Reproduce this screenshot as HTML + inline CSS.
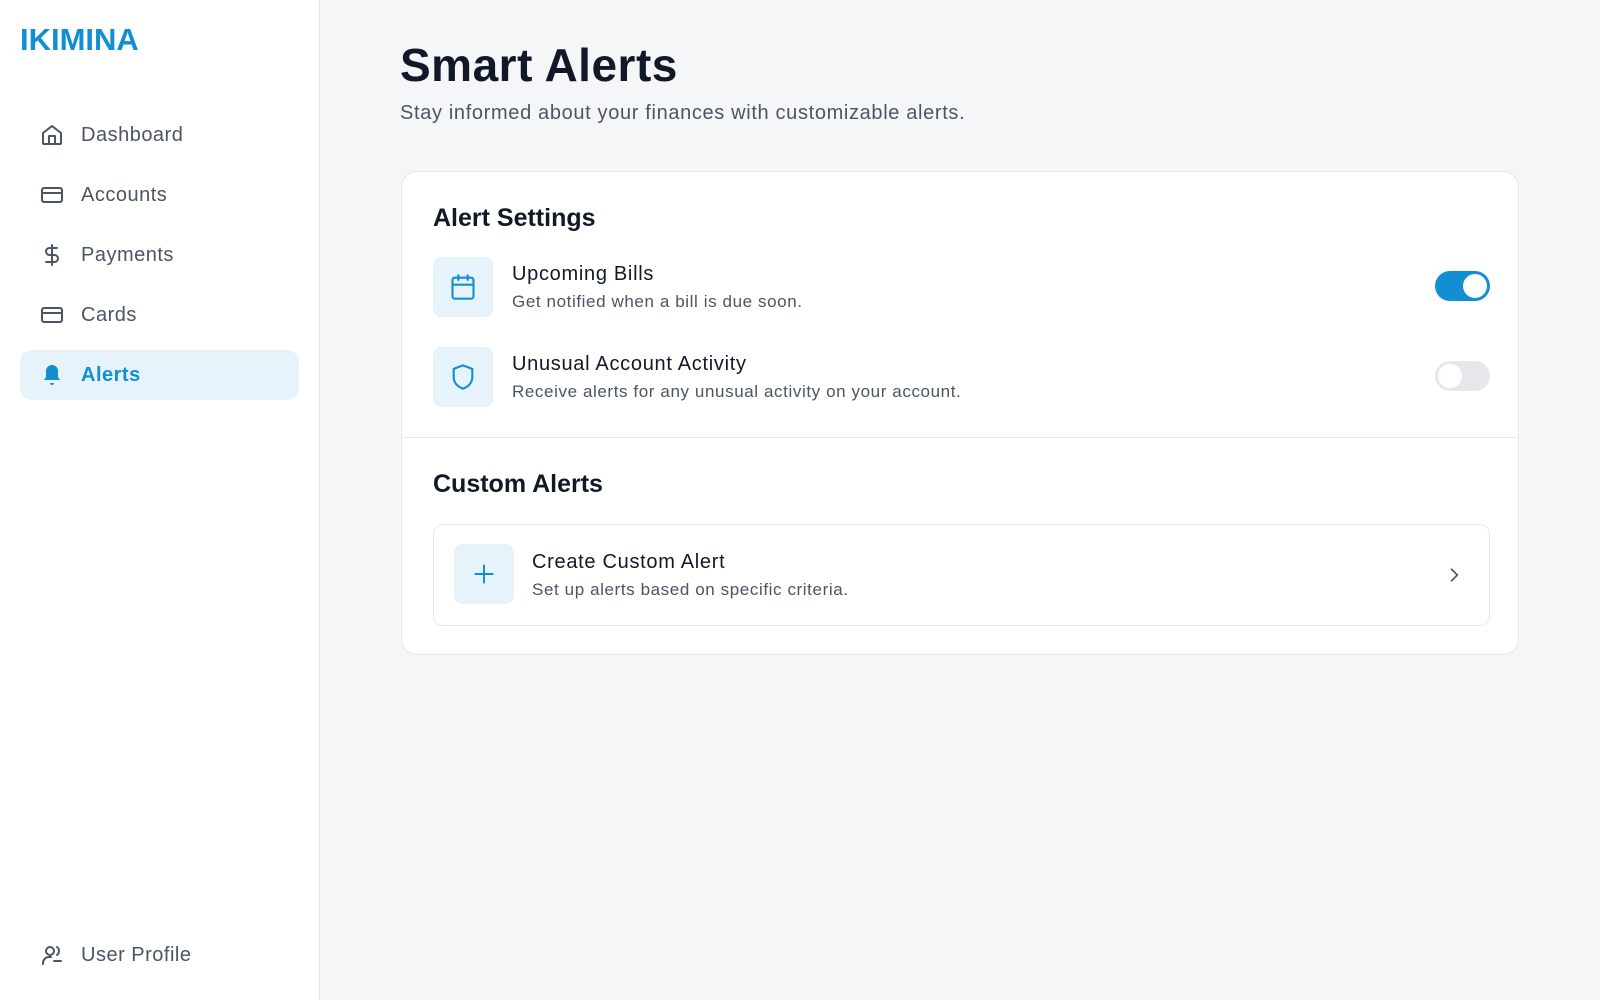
<!DOCTYPE html>
<html><head><meta charset="utf-8"><style>
*{margin:0;padding:0;box-sizing:border-box}
body{width:1600px;height:1000px;background:#f5f6f8;font-family:"Liberation Sans",sans-serif;position:relative;overflow:hidden;color:#111827}
.side{position:absolute;left:0;top:0;width:320px;height:1000px;background:#fff;border-right:1px solid #e5e7eb}
.logo{position:absolute;left:20px;top:22px;font-size:31px;font-weight:700;color:#128fd3;letter-spacing:0}
.nav{position:absolute;left:20px;width:279px;height:50px;display:flex;align-items:center;font-size:20px;color:#4b5563;border-radius:12px;letter-spacing:0.5px}
.nav svg{position:absolute;left:20px;top:13px}
.nav span{position:absolute;left:61px}
.nav.act{background:#e6f3fb;color:#128fd3;font-weight:700}
h1{position:absolute;left:400px;top:38px;font-size:46px;font-weight:700;color:#111827;letter-spacing:0.5px}
.sub{position:absolute;left:400px;top:102px;font-size:20px;color:#4b5563;letter-spacing:0.65px}
.card{position:absolute;left:401px;top:171px;width:1118px;height:484px;background:#fff;border:1px solid #e5e7eb;border-radius:16px}
.h2{position:absolute;left:31px;font-size:25px;font-weight:700;color:#111827}
.ib{position:absolute;width:60px;height:60px;background:#e6f3fb;border-radius:8px;display:flex;align-items:center;justify-content:center}
.t{position:absolute;font-size:20px;color:#111827;letter-spacing:0.7px}
.d{position:absolute;font-size:17px;color:#4b5563;letter-spacing:0.6px}
.tg{position:absolute;left:1033px;width:55px;height:30px;border-radius:15px}
.tg i{position:absolute;top:3px;width:24px;height:24px;border-radius:50%;background:#fff}
.div{position:absolute;left:0;top:265px;width:100%;height:1px;background:#e5e7eb}
.box{position:absolute;left:31px;top:352px;width:1057px;height:102px;border:1px solid #e5e7eb;border-radius:10px}
</style></head><body>
<div class="side">
<div class="logo">IKIMINA</div>
<div class="nav" style="top:110px"><svg width="24" height="24" viewBox="0 0 24 24" fill="none" stroke="#4b5563" stroke-width="2" stroke-linejoin="round"><path d="M3 10l9-7 9 7v10a1 1 0 0 1-1 1H4a1 1 0 0 1-1-1z"/><path d="M9 21v-8h6v8"/></svg><span>Dashboard</span></div>
<div class="nav" style="top:170px"><svg width="24" height="24" viewBox="0 0 24 24" fill="none" stroke="#4b5563" stroke-width="2"><rect x="2" y="5" width="20" height="14" rx="2"/><path d="M2 10h20"/></svg><span>Accounts</span></div>
<div class="nav" style="top:230px"><svg width="24" height="24" viewBox="0 0 24 24" fill="none" stroke="#4b5563" stroke-width="2" stroke-linecap="round"><path d="M12 2v20M17 5H9.5a3.5 3.5 0 0 0 0 7h5a3.5 3.5 0 0 1 0 7H6"/></svg><span>Payments</span></div>
<div class="nav" style="top:290px"><svg width="24" height="24" viewBox="0 0 24 24" fill="none" stroke="#4b5563" stroke-width="2"><rect x="2" y="5" width="20" height="14" rx="2"/><path d="M2 10h20"/></svg><span>Cards</span></div>
<div class="nav act" style="top:350px"><svg width="24" height="24" viewBox="0 0 24 24" fill="#128fd3"><path d="M12 2a6 6 0 0 0-6 6v6l-2 3h16l-2-3V8a6 6 0 0 0-6-6z"/><path d="M10 20h4a2 2 0 0 1-4 0z"/></svg><span>Alerts</span></div>
<div class="nav" style="top:930px"><svg width="24" height="24" viewBox="0 0 24 24" fill="none" stroke="#4b5563" stroke-width="2" stroke-linecap="round"><circle cx="10" cy="8" r="4"/><path d="M3 21v-1a6 6 0 0 1 6-6h2M17 4a5 5 0 0 1 0 8M14 18h7"/></svg><span>User Profile</span></div>
</div>
<h1>Smart Alerts</h1>
<div class="sub">Stay informed about your finances with customizable alerts.</div>
<div class="card">
<div class="h2" style="top:32px">Alert Settings</div>
<div class="ib" style="left:31px;top:85px"><svg width="28" height="28" viewBox="0 0 24 24" fill="none" stroke="#128fd3" stroke-width="1.8" stroke-linecap="round"><rect x="3" y="4" width="18" height="18" rx="2"/><path d="M16 2v4M8 2v4M3 10h18"/></svg></div>
<div class="t" style="left:110px;top:91px">Upcoming Bills</div>
<div class="d" style="left:110px;top:120px">Get notified when a bill is due soon.</div>
<div class="tg" style="top:99px;background:#128fd3"><i style="left:28px"></i></div>
<div class="ib" style="left:31px;top:175px"><svg width="28" height="28" viewBox="0 0 24 24" fill="none" stroke="#128fd3" stroke-width="1.8" stroke-linejoin="round"><path d="M12 2l8 3v7c0 5-3.5 8.5-8 10-4.5-1.5-8-5-8-10V5z"/></svg></div>
<div class="t" style="left:110px;top:181px">Unusual Account Activity</div>
<div class="d" style="left:110px;top:210px">Receive alerts for any unusual activity on your account.</div>
<div class="tg" style="top:189px;background:#e5e7eb"><i style="left:3px"></i></div>
<div class="div"></div>
<div class="h2" style="top:298px">Custom Alerts</div>
<div class="box">
<div class="ib" style="left:20px;top:19px"><svg width="26" height="26" viewBox="0 0 24 24" fill="none" stroke="#128fd3" stroke-width="1.8" stroke-linecap="round"><path d="M12 4v16M4 12h16"/></svg></div>
<div class="t" style="left:98px;top:26px">Create Custom Alert</div>
<div class="d" style="left:98px;top:55px">Set up alerts based on specific criteria.</div>
<svg style="position:absolute;left:1010px;top:40px" width="20" height="20" viewBox="0 0 24 24" fill="none" stroke="#4b5563" stroke-width="2" stroke-linecap="round"><path d="M9 5l7 7-7 7"/></svg>
</div>
</div>
</body></html>
